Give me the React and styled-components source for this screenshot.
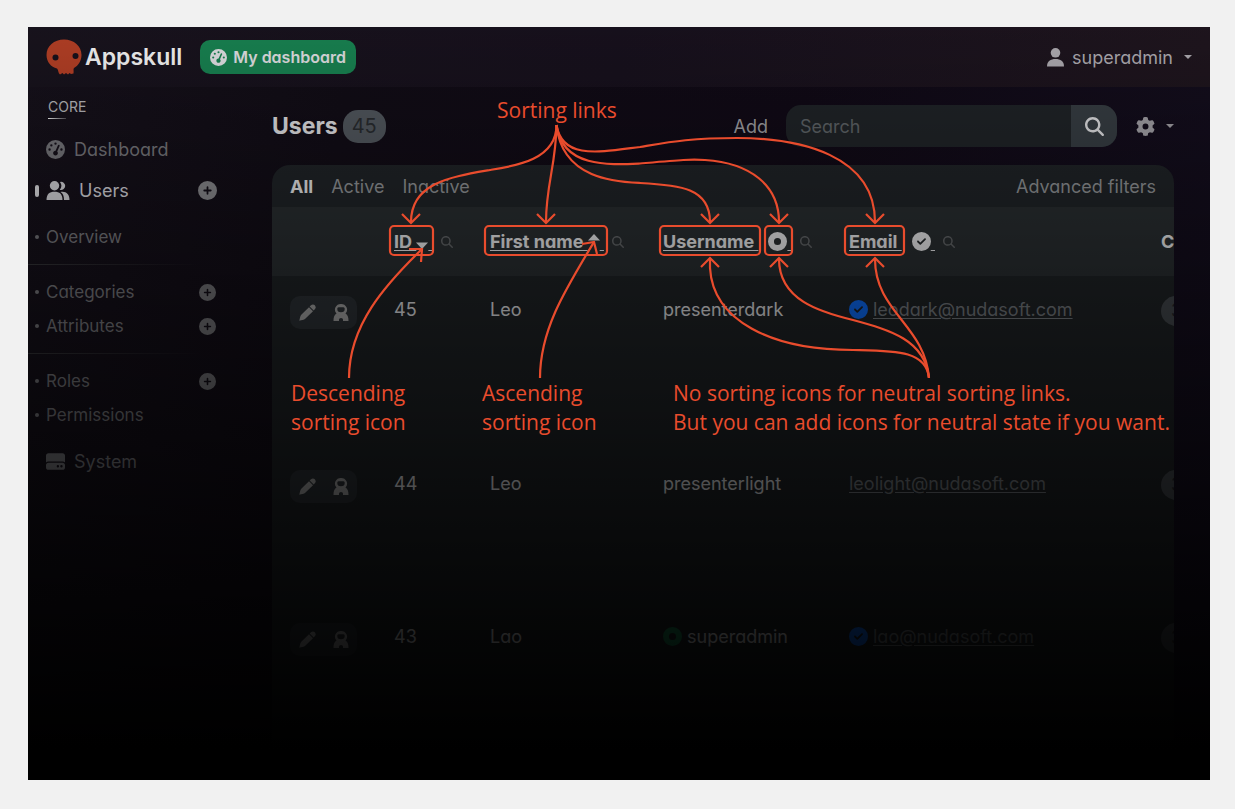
import React from 'react'
import styled, { createGlobalStyle } from 'styled-components'
import {
  FaGaugeHigh, FaCirclePlus, FaHardDrive, FaMagnifyingGlass, FaGear, FaCircleDot, FaCircleCheck
} from 'react-icons/fa6'

const users = [
  { id: 45, name: 'Leo', username: 'presenterdark', email: 'leodark@nudasoft.com', verified: true, height: 174 },
  { id: 44, name: 'Leo', username: 'presenterlight', email: 'leolight@nudasoft.com', height: 153 },
  { id: 43, name: 'Lao', username: 'superadmin', email: 'lao@nudasoft.com', verified: true, online: true, height: 177 },
]

const boxes = [[390, 43], [485, 122], [660, 100], [765, 27], [845, 59]]

const curves = [
  'M556.5 125C556.5 160 515 166 490 170C450 177 411 183 411 222',
  'M556.5 125C556 165 546 185 546 222',
  'M556.5 125C562 180 618 182 640 183C680 185 710 188 710 222',
  'M556.5 125C562 168 610 165 640 163.5C680 160 690 159 705 160C750 163 779 185 779 222',
  'M556.5 125C562 160 600 152 640 147C670 142 690 138 737 138C800 138 875 155 875 222',
  'M710 259V268C713 320 770 350 853 350C895 351 926 350 929 378',
  'M779 259C779 300 820 312 853 320C890 330 925 340 929 378',
  'M875 259C875 312 925 325 929 378',
  'M349 378C349 325 385 285 422 249',
  'M409 249H422L421 262',
  'M540 378C540 330 565 290 594 242',
  'M582 244L594 242L597 254',
]

function Skull() {
  return (
    <svg width="36" height="36" viewBox="0 0 36 36" aria-hidden="true">
      <path fill="#bb4227" d="M18 0.500C28 0.500 35.500 7 35.500 16C35.500 22 32 27 28 29C27 30 28 32 27.500 34.500L25 35L23.500 34L22 35.500L20 34L18 35.500L16.500 34L14 35.500C12 34 12.500 31 11 29.500C5 28 0.500 23 0.500 16C0.500 7 8 0.500 18 0.500Z" />
      <circle cx="9.500" cy="18.500" r="3" fill="#19121d" />
      <circle cx="29.500" cy="17" r="3" fill="#19121d" />
    </svg>
  )
}

function PersonIcon() {
  return (
    <svg width="17" height="19" viewBox="0 0 17 19" fill="currentColor" aria-hidden="true">
      <circle cx="8.500" cy="4.800" r="4.800" />
      <path d="M0 18.500C0 13 3.500 11 8.500 11S17 13 17 18.500Z" />
    </svg>
  )
}

function PeopleIcon() {
  return (
    <svg width="24" height="19" viewBox="0 0 24 19" fill="currentColor" aria-hidden="true">
      <circle cx="8.500" cy="4.700" r="4.700" />
      <path d="M14 0.900A4.100 4.100 0 1 1 13.700 8.700A6.200 6.200 0 0 0 14 0.900Z" />
      <path d="M0.500 19C0.500 13 3.500 10.800 8.500 10.800S16.500 13 16.500 19Z" />
      <path d="M14.500 11C20 10 23.500 13 23.500 19H18C18 15 17 12.500 14.500 11Z" />
    </svg>
  )
}

function PencilIcon() {
  return (
    <svg width="17" height="17" viewBox="0 0 17 17" fill="currentColor" aria-hidden="true">
      <path d="M10 3.200L14 7.200L6.500 14.500C5 16 2.500 16 0.300 16.700C1 14.500 1 12 2.500 10.500Z" />
      <path d="M10.700 2.500L12 1.200C14.800 -1 18 2.300 16 5L14.700 6.500Z" />
    </svg>
  )
}

function AstronautIcon() {
  return (
    <svg width="16" height="17" viewBox="0 0 16 17" fill="currentColor" fillRule="evenodd" aria-hidden="true">
      <path d="M8 0A6 5.700 0 0 1 12.500 9.500C14.800 11 15.500 13.500 15.500 17H10V15.500A2 1.500 0 0 0 6 15.500V17H0.500C0.500 13.500 1.200 11 3.500 9.500A6 5.700 0 0 1 8 0ZM5.500 3.300A1.500 1.500 0 0 0 4.300 5C4.300 7.200 5.500 8.200 8 8.200S11.700 7.200 11.700 5A1.500 1.500 0 0 0 10.500 3.300Z" />
    </svg>
  )
}

function SortIcon({ ascending }) {
  return (
    <svg width="12" height="18" viewBox="0 0 12 18" fill="currentColor" aria-hidden="true">
      <path d={ascending ? 'M6 1L12 7.500H0Z' : 'M0 9.500H12L6 16Z'} />
    </svg>
  )
}

function SubItem({ label, add }) {
  return (
    <SubLink>
      <a href="#">{label}</a>
      {add && <AddButton aria-label={`Add ${label}`}><FaCirclePlus size={17} /></AddButton>}
    </SubLink>
  )
}

function ColumnSearch({ label }) {
  return (
    <SearchIcon aria-label={`Search ${label}`}><FaMagnifyingGlass size={12} /></SearchIcon>
  )
}

function Annotations() {
  return (
    <Notes>
      <svg width="1182" height="753" viewBox="28 27 1182 753" fill="none" stroke="#e94c2d" strokeWidth="2.200" aria-hidden="true">
        {boxes.map(([x, w]) => <rect key={x} x={x} y="226" width={w} height="29" rx="4" />)}
        {curves.map(d => <path key={d} d={d} />)}
        {[411, 546, 710, 779, 875].map(x => <path key={x} d={`M${x - 9} 214L${x} 223L${x + 9} 214`} />)}
        {[710, 779, 875].map(x => <path key={x} d={`M${x - 9} 267L${x} 258L${x + 9} 267`} />)}
      </svg>
      <Note $left={469} $top={69}>Sorting links</Note>
      <Note $left={263} $top={352}>Descending<br />sorting icon</Note>
      <Note $left={454} $top={352}>Ascending<br />sorting icon</Note>
      <Note $left={645} $top={352}>
        No sorting icons for neutral sorting links.<br />
        But you can add icons for neutral state if you want.
      </Note>
    </Notes>
  )
}

export default function App() {
  return (
    <Page>
      <GlobalStyle />
      <Window>
        <Header>
          <Brand href="#"><Skull />Appskull</Brand>
          <DashboardButton><FaGaugeHigh size={17} />My dashboard</DashboardButton>
          <Account><PersonIcon /><span>superadmin</span><Caret /></Account>
        </Header>
        <Body>
          <Sidebar>
            <Group>CORE</Group>
            <MainLink><a href="#"><FaGaugeHigh size={19} />Dashboard</a></MainLink>
            <MainLink $active>
              <a href="#"><PeopleIcon />Users</a>
              <AddButton $bright aria-label="Add Users"><FaCirclePlus size={19} /></AddButton>
            </MainLink>
            <SubMenu>
              <SubItem label="Overview" />
              <Divider />
              <SubItem label="Categories" add />
              <SubItem label="Attributes" add />
              <Divider />
              <SubItem label="Roles" add />
              <SubItem label="Permissions" />
            </SubMenu>
            <MainLink><a href="#"><FaHardDrive size={19} />System</a></MainLink>
          </Sidebar>
          <Main>
            <TitleBar>
              <Title>Users</Title>
              <Count>45</Count>
              <AddLink href="#">Add</AddLink>
              <SearchBox>
                <input type="text" placeholder="Search" aria-label="Search" />
                <button aria-label="Run search"><FaMagnifyingGlass size={19} /></button>
              </SearchBox>
              <Settings aria-label="Settings"><FaGear size={19} /><Caret /></Settings>
            </TitleBar>
            <Card>
              <Filters>
                <FilterLink href="#" $active>All</FilterLink>
                <FilterLink href="#">Active</FilterLink>
                <FilterLink href="#">Inactive</FilterLink>
                <FilterLink href="#" $end>Advanced filters</FilterLink>
              </Filters>
              <Table>
                <colgroup>
                  <Col $width={104} /><Col $width={96} /><Col $width={173} />
                  <Col $width={186} /><Col $width={312} /><Col $width={140} />
                </colgroup>
                <thead>
                  <tr>
                    <th aria-label="Actions" />
                    <th><SortLink href="#">ID <SortIcon />&nbsp;</SortLink><ColumnSearch label="ID" /></th>
                    <th><SortLink href="#">First name <SortIcon ascending />&nbsp;</SortLink><ColumnSearch label="first name" /></th>
                    <th>
                      <SortLink href="#">Username&nbsp;</SortLink>
                      <SortLink href="#" $gap><FaCircleDot size={19} />&nbsp;</SortLink>
                      <ColumnSearch label="username" />
                    </th>
                    <th>
                      <SortLink href="#">Email&nbsp;</SortLink>
                      <SortLink href="#" $gap><FaCircleCheck size={19} />&nbsp;</SortLink>
                      <ColumnSearch label="email" />
                    </th>
                    <th>C</th>
                  </tr>
                </thead>
                <tbody>
                  {users.map(user => (
                    <Row key={user.id} $height={user.height}>
                      <td>
                        <Actions>
                          <button aria-label="Edit"><PencilIcon /></button>
                          <button aria-label="Log in as user"><AstronautIcon /></button>
                        </Actions>
                      </td>
                      <td>{user.id}</td>
                      <td>{user.name}</td>
                      <td>{user.online && <Mark $color="#198754"><FaCircleDot size={19} /></Mark>}{user.username}</td>
                      <td>
                        {user.verified && <Mark $color="#0d6efd"><FaCircleCheck size={19} /></Mark>}
                        <Email href="#">{user.email}</Email>
                      </td>
                      <td><Pill>3</Pill></td>
                    </Row>
                  ))}
                </tbody>
              </Table>
            </Card>
          </Main>
        </Body>
        <Shade />
        <Annotations />
      </Window>
    </Page>
  )
}

const GlobalStyle = createGlobalStyle`
  *{
    box-sizing: border-box;
  }
  body{
    margin: 0;
    background: #f1f1f1;
    font-family: Inter, "Liberation Sans", sans-serif;
    font-feature-settings: "cv11";
    font-size: 18px;
    line-height: 27px;
    color: #e9e9ec;
  }
  a{
    color: inherit;
    text-decoration: none;
  }
  button, input{
    font: inherit;
    font-feature-settings: inherit;
    color: inherit;
    background: none;
    border: 0;
    padding: 0;
  }
  button{
    cursor: pointer;
  }
  svg{
    flex-shrink: 0;
  }
`

const Page = styled.div`
  min-height: 100vh;
  padding: 27px 25px 29px 28px;
`

const Window = styled.div`
  position: relative;
  overflow: hidden;
  background: linear-gradient(100deg, #17121c 0%, #120d17 25%, #110a17 60%, #150f20 100%);
`

const Header = styled.header`
  height: 60px;
  padding: 0 18px;
  display: flex;
  align-items: center;
  background: linear-gradient(90deg, #19141e, #18111e 50%, #20161f);
`

const Brand = styled.a`
  display: flex;
  align-items: center;
  gap: 3px;
  font-size: 23px;
  font-weight: 600;
  color: #fff;
`

const DashboardButton = styled.button`
  height: 34px;
  margin-left: 18px;
  padding: 0 10px;
  display: flex;
  align-items: center;
  gap: 6px;
  border-radius: 10px;
  background: #198754;
  font-size: 16px;
  font-weight: 600;
`

const Account = styled.button`
  margin-left: auto;
  display: flex;
  align-items: center;
  gap: 8px;
  color: #b5b2b8;
`

const Caret = styled.span`
  margin-left: 3px;
  border: 4px solid transparent;
  border-top-color: currentColor;
  border-bottom: 0;
`

const Body = styled.div`
  display: flex;
`

const Sidebar = styled.nav`
  width: 244px;
  flex-shrink: 0;
  color: #7b7b80;
`

const Group = styled.div`
  height: 42px;
  padding: 7px 20px 0;
  font-size: 14px;
  line-height: 26px;
  color: #c0c0c4;

  &::after{
    content: "";
    display: block;
    width: 18px;
    height: 1px;
    margin-top: -2px;
    background: linear-gradient(90deg, #fff, #fff4);
  }
`

const MainLink = styled.div`
  height: 41px;
  padding: 0 36px 0 18px;
  display: flex;
  align-items: center;
  justify-content: space-between;
  color: ${props => props.$active ? '#dedee2' : 'inherit'};
  position: relative;

  a{
    display: flex;
    align-items: center;
    gap: 9px;
  }

  &::before{
    content: "";
    display: ${props => props.$active ? 'block' : 'none'};
    position: absolute;
    left: 7px;
    width: 4px;
    height: 12px;
    border-radius: 2px;
    background: #e9e9ec;
  }
`

const AddButton = styled.button`
  width: 19px;
  display: flex;
  justify-content: center;
  margin-right: 19px;
  color: ${props => props.$bright ? '#8f8f93' : '#77777b'};
`

const SubMenu = styled.div`
  padding: 9px 0;
`

const SubLink = styled.div`
  height: 34px;
  padding: 0 36px 0 7px;
  display: flex;
  align-items: center;
  font-size: 17px;

  a{
    flex: 1;
    display: flex;
    align-items: center;
    gap: 7px;
  }

  a::before{
    content: "";
    width: 4px;
    height: 4px;
    border-radius: 50%;
    background: currentColor;
  }
`

const Divider = styled.hr`
  height: 1px;
  margin: 10px 70px 10px 0;
  border: 0;
  background: linear-gradient(90deg, #37373b, #37373b00);
`

const Main = styled.main`
  flex: 1;
  min-width: 0;
  padding: 18px 36px 0 0;
`

const TitleBar = styled.div`
  height: 42px;
  margin-bottom: 18px;
  display: flex;
  align-items: center;
`

const Title = styled.h1`
  margin: 0;
  font-size: 23px;
  font-weight: 700;
`

const Count = styled.span`
  height: 33px;
  margin-left: 5px;
  padding: 0 9px;
  border-radius: 15px;
  background: #555b62;
  color: #2a2d31;
  font-size: 20px;
  line-height: 33px;
`

const AddLink = styled.a`
  margin-left: auto;
  color: #a5a5a9;
`

const SearchBox = styled.form`
  width: 331px;
  height: 42px;
  margin-left: 18px;
  display: flex;
  border-radius: 15px;
  overflow: hidden;
  background: #212529;

  input{
    flex: 1;
    min-width: 0;
    padding: 0 14px;
    outline: none;
  }
  input::placeholder{
    color: #62676b;
    opacity: 1;
  }
  button{
    width: 46px;
    display: grid;
    place-items: center;
    background: #394046;
  }
`

const Settings = styled.button`
  margin-left: 19px;
  display: flex;
  align-items: center;
  gap: 8px;
  color: #a9a7ad;
`

const Card = styled.section`
  border-radius: 18px 18px 0 0;
  overflow: hidden;
  background: #212529;
`

const Filters = styled.div`
  height: 42px;
  padding: 0 18px;
  display: flex;
  align-items: center;
  gap: 18px;
`

const FilterLink = styled.a`
  margin-left: ${props => props.$end ? 'auto' : '0'};
  color: ${props => props.$active ? '#f0f0f2' : '#96999c'};
  font-weight: ${props => props.$active ? 700 : 400};
`

const Table = styled.table`
  width: 1011px;
  table-layout: fixed;
  border-collapse: collapse;
  background: #202427;

  thead tr{
    height: 69px;
    background: #2b3033;
  }
  th, td{
    padding: 0 0 0 18px;
    text-align: left;
    white-space: nowrap;
  }
  th{
    color: #f4f4f6;
  }
  a svg, td svg{
    vertical-align: -3px;
  }
`

const Col = styled.col`
  width: ${props => props.$width}px;
`

const SortLink = styled.a`
  margin-left: ${props => props.$gap ? '10px' : '0'};
  text-decoration: underline;
  text-underline-offset: 2px;
  text-decoration-skip-ink: none;
`

const SearchIcon = styled.button`
  margin-left: 8px;
  color: #66696c;
`

const Row = styled.tr`
  height: ${props => props.$height}px;

  td{
    padding-top: 20px;
    vertical-align: top;
  }
`

const Actions = styled.div`
  width: 67px;
  height: 33px;
  display: flex;
  align-items: center;
  justify-content: space-around;
  border-radius: 10px;
  background: #2e3338;
  color: #aaa;

  button{
    display: flex;
  }
`

const Mark = styled.span`
  margin-right: 5px;
  color: ${props => props.$color};
`

const Email = styled.a`
  color: #787d82;
  text-decoration: underline;
  text-underline-offset: 2px;
`

const Pill = styled.span`
  display: inline-block;
  height: 30px;
  padding: 0 10px;
  border-radius: 15px;
  background: #454a4f;
  color: #212529;
  line-height: 30px;
`

const Shade = styled.div`
  position: absolute;
  inset: 0;
  pointer-events: none;
  background: linear-gradient(rgba(0, 0, 0, 0.08), #000 96%);
`

const Notes = styled.div`
  position: absolute;
  inset: 0;
  pointer-events: none;
`

const Note = styled.p`
  position: absolute;
  left: ${props => props.$left}px;
  top: ${props => props.$top}px;
  margin: 0;
  color: #e94c2d;
  font-family: "Open Sans", "Noto Sans", sans-serif;
  font-size: 21px;
  line-height: 29px;
  white-space: nowrap;
`
